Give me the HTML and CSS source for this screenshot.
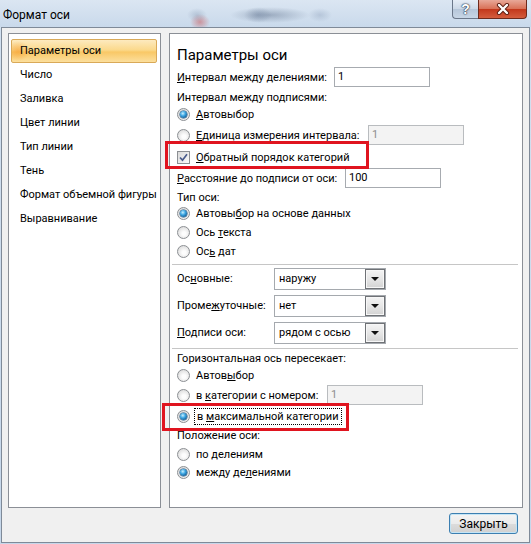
FILE: index.html
```html
<!DOCTYPE html>
<html>
<head>
    <title>Формат оси</title>
    <link rel="stylesheet" href="styles.css">
</head>
<body>
    <div class="window">
        <div class="titlebar">
            <span class="title">Формат оси</span>
            <div class="caption-btns">
                <div class="cap-btn help">?</div>
                <div class="cap-btn close">
                    <svg width="16" height="12" viewBox="0 0 16 12">
                        <path d="M4 2 L12 10 M12 2 L4 10" stroke="#5b1d12" stroke-width="4.2" stroke-linecap="round"/>
                        <path d="M4 2 L12 10 M12 2 L4 10" stroke="#ffffff" stroke-width="2.4" stroke-linecap="round"/>
                    </svg>
                </div>
            </div>
        </div>

        <div class="client">
            <div class="panels">
                <ul class="nav">
                    <li class="active">Параметры оси</li>
                    <li>Число</li>
                    <li>Заливка</li>
                    <li>Цвет линии</li>
                    <li>Тип линии</li>
                    <li>Тень</li>
                    <li>Формат объемной фигуры</li>
                    <li>Выравнивание</li>
                </ul>

                <div class="pane">
                    <h1 class="pane-title">Параметры оси</h1>

                    <!-- interval / order / axis type -->
                    <div class="section s-axis">
                        <div class="row">
                            <span class="lbl lbl-tick"><u>И</u>нтервал между делениями:</span>
                            <span class="edit">1</span>
                        </div>
                        <div class="row">Интервал между подписями:</div>
                        <div class="row">
                            <span class="radio on"></span>
                            <span><u>А</u>втовыбор</span>
                        </div>
                        <div class="row">
                            <span class="radio"></span>
                            <span class="lbl lbl-unit"><u>Е</u>диница измерения интервала:</span>
                            <span class="edit disabled">1</span>
                        </div>
                        <div class="row">
                            <span class="check">
                                <svg width="11" height="11" viewBox="0 0 11 11">
                                    <path d="M2 5.5 L4.5 8.2 L9 2.2" stroke="#4a5c8c" stroke-width="1.7" fill="none"/>
                                </svg>
                            </span>
                            <span><u>О</u>братный порядок категорий</span>
                        </div>
                        <div class="row">
                            <span class="lbl lbl-dist"><u>Р</u>асстояние до подписи от оси:</span>
                            <span class="edit">100</span>
                        </div>
                        <div class="row">Тип оси:</div>
                        <div class="row">
                            <span class="radio on"></span>
                            <span>Автовы<u>б</u>ор на основе данных</span>
                        </div>
                        <div class="row">
                            <span class="radio"></span>
                            <span>Ось <u>т</u>екста</span>
                        </div>
                        <div class="row">
                            <span class="radio"></span>
                            <span>Ос<u>ь</u> дат</span>
                        </div>
                    </div>

                    <!-- tick marks -->
                    <div class="section s-marks">
                        <div class="row">
                            <span class="lbl lbl-combo">Ос<u>н</u>овные:</span>
                            <div class="combo"><span class="combo-text">наружу</span><span class="combo-btn"></span></div>
                        </div>
                        <div class="row">
                            <span class="lbl lbl-combo">Проме<u>ж</u>уточные:</span>
                            <div class="combo"><span class="combo-text">нет</span><span class="combo-btn"></span></div>
                        </div>
                        <div class="row">
                            <span class="lbl lbl-combo"><u>П</u>одписи оси:</span>
                            <div class="combo"><span class="combo-text">рядом с осью</span><span class="combo-btn"></span></div>
                        </div>
                    </div>

                    <!-- crossing / position -->
                    <div class="section s-cross">
                        <div class="row">Горизонтальная ось пересекает:</div>
                        <div class="row">
                            <span class="radio"></span>
                            <span>Автов<u>ы</u>бор</span>
                        </div>
                        <div class="row">
                            <span class="radio"></span>
                            <span class="lbl lbl-cat">в <u>к</u>атегории с номером:</span>
                            <span class="edit disabled">1</span>
                        </div>
                        <div class="row">
                            <span class="radio on"></span>
                            <span class="focus">в <u>м</u>аксимальной категории</span>
                        </div>
                        <div class="row">Положение оси:</div>
                        <div class="row">
                            <span class="radio"></span>
                            <span>по <u>д</u>елениям</span>
                        </div>
                        <div class="row">
                            <span class="radio on"></span>
                            <span>между де<u>л</u>ениями</span>
                        </div>
                    </div>
                </div>
            </div>

            <div class="footer">
                <button class="btn">Закрыть</button>
            </div>
        </div>

        <!-- red highlight marks drawn over the dialog -->
        <div class="mark mark-order"></div>
        <div class="mark mark-max"></div>
    </div>
</body>
</html>
```

FILE: styles.css
```css
* {
    box-sizing: border-box;
}

body {
    margin: 0;
    font-family: Roboto, "Liberation Sans", sans-serif;
    font-size: 11px;
    color: #000;
}

.window {
    position: relative;
    width: 531px;
    height: 544px;
    display: flex;
    flex-direction: column;
    background: linear-gradient(to bottom, #d3e1f0, #c6d7ea);
}

/* title bar */

.titlebar {
    height: 27px;
    display: flex;
    justify-content: space-between;
    align-items: flex-start;
    background:
        radial-gradient(ellipse 14px 8px at 258px 15px, rgba(90, 110, 140, 0.35), transparent),
        radial-gradient(ellipse 10px 7px at 197px 15px, rgba(90, 110, 140, 0.25), transparent),
        radial-gradient(ellipse 10px 8px at 200px 22px, rgba(200, 60, 60, 0.45), transparent),
        radial-gradient(ellipse 40px 8px at 270px 15px, rgba(60, 80, 110, 0.35), transparent),
        radial-gradient(ellipse 12px 7px at 320px 15px, rgba(120, 140, 170, 0.3), transparent),
        linear-gradient(to bottom, #dbe6f2, #c9d9eb);
}

.title {
    padding: 8px 0 0 3px;
    font-size: 12px;
}

.caption-btns {
    display: flex;
    margin-right: 4px;
}

.cap-btn {
    height: 19px;
    display: flex;
    align-items: center;
    justify-content: center;
    border: 1px solid #6b7789;
    border-top: none;
}

.cap-btn.help {
    width: 26px;
    border-right: none;
    border-bottom-left-radius: 4px;
    background: linear-gradient(to bottom, #e6edf6, #ccd8e6 50%, #b6c6d9 51%, #c8d6e6);
    color: #fff;
    font: bold 14px "Liberation Sans", sans-serif;
    text-shadow: 0 0 1px #2b3a4e, 0 0 1px #2b3a4e, 0 0 2px #2b3a4e;
}

.cap-btn.close {
    width: 49px;
    border-color: #6e2a1c;
    border-bottom-right-radius: 4px;
    background: linear-gradient(to bottom, #e8a898, #d86f55 50%, #c2371b 51%, #d45d3e);
}

/* client area */

.client {
    flex: 1;
    margin: 0 1px 1px 1px;
    border: 1px solid #7f8a98;
    background: #f0f0f0;
    padding: 5px 6px 0 6px;
}

.panels {
    display: flex;
    gap: 8px;
    height: 475px;
}

.nav {
    width: 153px;
    margin: 0;
    padding: 5px 3px 0 2px;
    list-style: none;
    background: #fff;
    border: 1px solid #8b8f96;
}

.nav li {
    height: 24px;
    line-height: 22px;
    padding-left: 8px;
    white-space: nowrap;
    border: 1px solid transparent;
    border-radius: 2px;
}

.nav li.active {
    border-color: #d9a958;
    background:
        radial-gradient(ellipse 12px 10px at 6px 50%, rgba(246, 150, 40, 0.55), transparent),
        linear-gradient(to bottom, #fdeabf, #fbd98c 45%, #f9c866 55%, #fcdf9d);
}

.pane {
    flex: 1;
    background: #fff;
    border: 1px solid #8b8f96;
    padding: 10px 0 0 7px;
}

.pane-title {
    margin: 0;
    height: 22px;
    font-size: 15px;
    font-weight: normal;
    line-height: 22px;
}

.section {
    display: grid;
    align-items: center;
    margin: 0 4px 0 -5px;
    padding-left: 5px;
}

.section + .section {
    border-top: 1px solid #c6c6c6;
}

.s-axis {
    grid-template-rows: 22px 19px 14px 28px 16px 26px 12px 20px 18px 20px;
    padding-bottom: 3px;
}

.s-marks {
    grid-template-rows: 27px 27px 27px;
    padding-bottom: 2px;
}

.s-cross {
    grid-template-rows: 18px 16px 24px 18px 20px 18px 18px;
}

.row {
    display: flex;
    align-items: center;
    white-space: nowrap;
}

.lbl-tick { width: 157px; }
.lbl-unit { width: 172px; }
.lbl-dist { width: 168px; }
.lbl-cat { width: 131px; }
.lbl-combo { width: 97px; }

/* controls */

.edit {
    width: 96px;
    height: 20px;
    line-height: 18px;
    padding-left: 3px;
    background: #fff;
    border: 1px solid #a7abb0;
}

.edit.disabled {
    background: #f3f3f3;
    border-color: #b9bcbf;
    color: #8d8d8d;
}

.radio {
    width: 13px;
    height: 13px;
    margin-right: 6px;
    border-radius: 50%;
    border: 1px solid #8c8f93;
    background: radial-gradient(circle at 55% 60%, #fdfdfd 20%, #d6d6d6 90%);
    display: flex;
    align-items: center;
    justify-content: center;
    flex-shrink: 0;
}

.radio.on::after {
    content: "";
    width: 7px;
    height: 7px;
    border-radius: 50%;
    background: radial-gradient(circle at 40% 35%, #c9f0ff 0, #3aa5e2 40%, #0d4f86 85%);
    box-shadow: 0 0 0 0.5px #174a74;
}

.check {
    width: 13px;
    height: 13px;
    margin-right: 6px;
    border: 1px solid #8c8f93;
    background: linear-gradient(135deg, #dadada, #fbfbfb);
    display: flex;
    align-items: center;
    justify-content: center;
}

.focus {
    outline: 1px dotted #000;
    outline-offset: 1px;
    padding: 0 1px;
}

.combo {
    width: 112px;
    height: 22px;
    display: flex;
    background: #fff;
    border: 1px solid #a5a9ae;
}

.combo-text {
    flex: 1;
    padding-left: 4px;
    line-height: 20px;
}

.combo-btn {
    width: 20px;
    border: 1px solid #6f7276;
    box-shadow: inset 0 0 0 1px #f7f7f7;
    background: linear-gradient(to bottom, #f4f4f4, #e6e6e6 50%, #d3d3d3);
    display: flex;
    align-items: center;
    justify-content: center;
}

.combo-btn::after {
    content: "";
    border-left: 4px solid transparent;
    border-right: 4px solid transparent;
    border-top: 4px solid #111;
}

/* footer */

.footer {
    display: flex;
    justify-content: flex-end;
    padding: 5px 5px 0 0;
}

.btn {
    width: 69px;
    height: 21px;
    padding: 0;
    font-family: inherit;
    font-size: 12px;
    color: #000;
    border: 1px solid #3c7fb1;
    border-radius: 3px;
    box-shadow: inset 0 0 0 1px #c4e5f6;
    background: linear-gradient(to bottom, #f4f4f4, #ebebeb 50%, #dcdcdc 51%, #d0d0d0);
}

/* annotation boxes */

.mark {
    position: absolute;
    border: 3px solid #e0141f;
}

.mark-order {
    left: 165px;
    top: 141px;
    width: 204px;
    height: 28px;
}

.mark-max {
    left: 162px;
    top: 403px;
    width: 187px;
    height: 28px;
}
```
